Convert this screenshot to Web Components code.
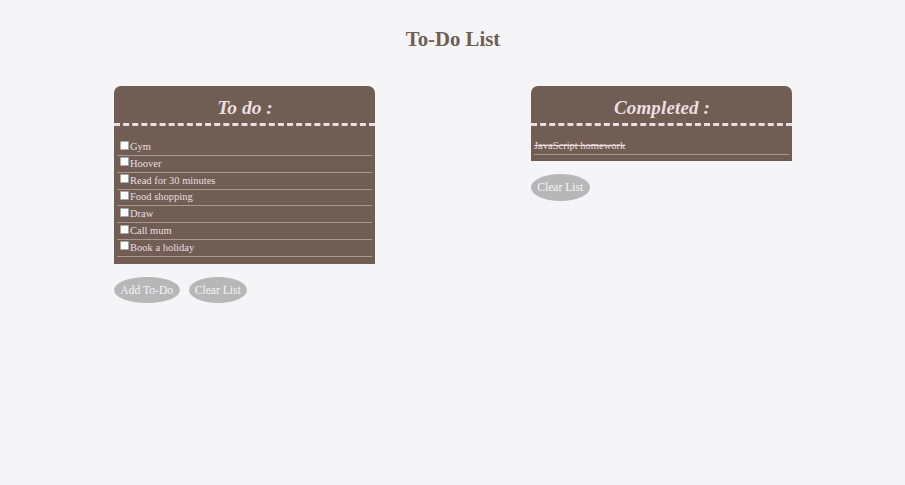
<!DOCTYPE html>
<html lang="en"><head><meta charset="utf-8"><title>To-Do List</title>
<style>
body{margin:0;background:#f5f5f8;font-family:"Liberation Serif",serif}
</style></head><body>
<todo-app></todo-app>
<script>
const define=(name,html,init)=>customElements.define(name,class extends HTMLElement{
  constructor(){super();this.attachShadow({mode:'open'}).innerHTML=html}
  connectedCallback(){if(init)init(this,this.shadowRoot)}
});
define('todo-item',`<style>
:host{display:flex;box-sizing:border-box;height:16.8px;border-bottom:1px solid #a8968f;color:#eedde0;font-size:10.5px;line-height:14px;padding:.9px 0 0 3px;white-space:nowrap}
:host([done]){padding-left:0;text-decoration:line-through;height:15px;padding-top:0;line-height:12px}
i{width:7px;height:7px;background:#fff;border:.5px solid #aaa;border-radius:1px;margin:.6px 1px 0 0;flex:none}
:host([done]) i{display:none}
</style><i></i><span><slot></slot></span>`);
define('todo-button',`<style>
:host{display:block}
button{display:block;box-sizing:border-box;height:26.5px;width:100%;border:0;border-radius:50%;background:#b7b7b7;color:#f5f5f8;font:11.6px/27px "Liberation Serif",serif;padding:0;white-space:nowrap;text-align:center}
</style><button><slot></slot></button>`);
define('todo-card',`<style>
:host{display:block;width:261px}
section{box-sizing:border-box;background:#705d53;border-radius:7px 7px 0 0}
h2{margin:0;box-sizing:border-box;height:40.4px;border-bottom:3px dashed #eedde0;color:#eedde0;font:italic 700 19.5px/43px "Monotype Corsiva","Liberation Serif",serif;text-align:center;white-space:nowrap;text-indent:1px}
.list{padding:13.3px 3px 7px}
:host([finished]) .list{padding:14.3px 3px 6.1px}
:host([finished]) h2{font-size:19px;letter-spacing:.15px}
.actions{display:flex;gap:9px;padding-top:13px}
</style><section><h2></h2><div class="list"><slot></slot></div></section><div class="actions"><slot name="action"></slot></div>`,
(el,root)=>{root.querySelector('h2').textContent=el.getAttribute('heading')});
define('todo-app',`<style>
:host{display:block}
h1{margin:0;box-sizing:border-box;padding-top:26px;height:85.5px;font-size:20.8px;line-height:25px;color:#705d53;text-align:center;text-indent:1px}
main{display:flex;justify-content:space-between;align-items:flex-start;padding:0 113px 0 114px}
.add{width:65.5px}.clear{width:58.5px}
</style><h1>To-Do List</h1><main>
<todo-card heading="To do :"><todo-item>Gym</todo-item><todo-item>Hoover</todo-item><todo-item>Read for 30 minutes</todo-item><todo-item>Food shopping</todo-item><todo-item>Draw</todo-item><todo-item>Call mum</todo-item><todo-item>Book a holiday</todo-item>
<todo-button class="add" slot="action">Add To-Do</todo-button><todo-button class="clear" slot="action">Clear List</todo-button></todo-card>
<todo-card finished heading="Completed :"><todo-item done>JavaScript homework</todo-item><todo-button class="clear" slot="action">Clear List</todo-button></todo-card>
</main>`);
</script></body></html>
